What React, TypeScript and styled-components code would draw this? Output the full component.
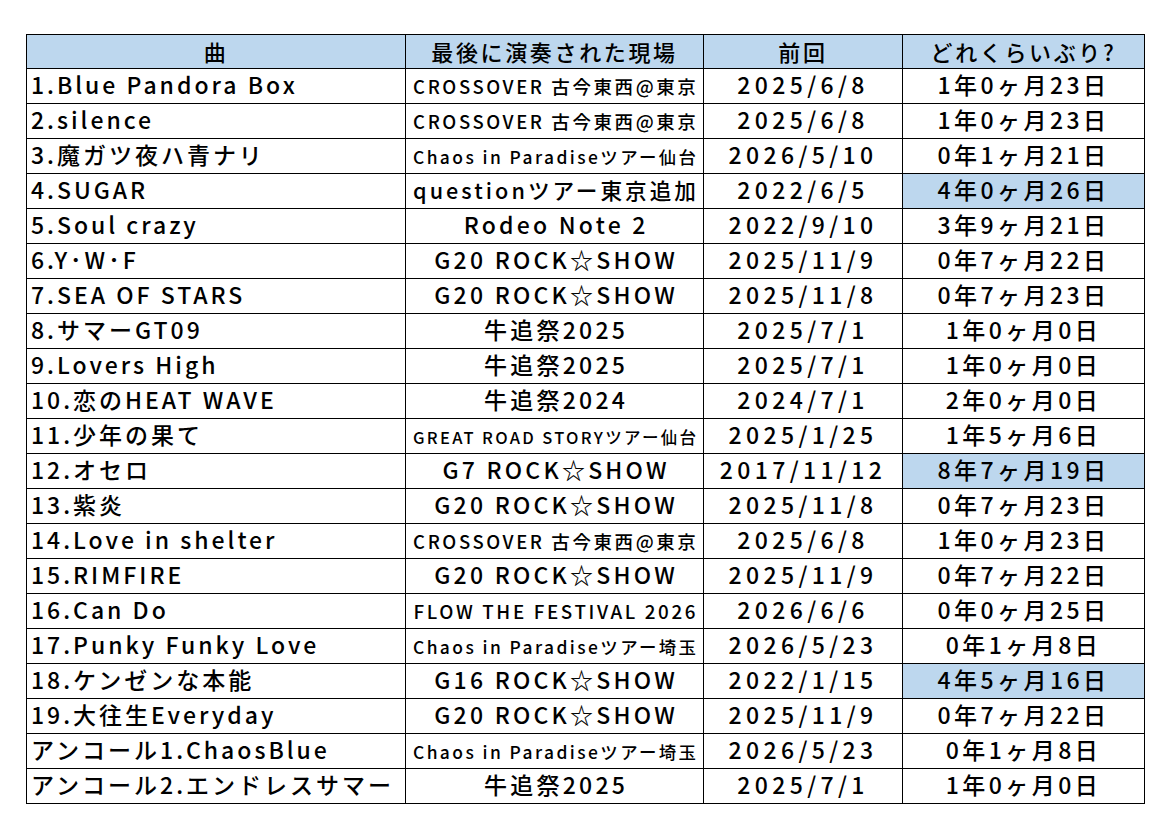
import React, { useLayoutEffect, useRef, useState } from "react";
import styled, { createGlobalStyle } from "styled-components";

const GlobalStyle = createGlobalStyle`
  html, body {
    margin: 0;
    padding: 0;
    background: #ffffff;
  }
  body {
    font-family: "Noto Sans CJK JP", "Noto Sans", sans-serif;
    color: #000;
  }
`;

const Page = styled.div`
  width: 1163px;
  height: 832px;
  padding: 34px 0 0 26px;
  box-sizing: border-box;
`;

const Table = styled.table`
  border-collapse: collapse;
  table-layout: fixed;
  width: 1118px;
`;

const Col = styled.col<{ $w: number }>`
  width: ${(p) => p.$w}px;
`;

const HeadCell = styled.th`
  height: 31px;
  padding: 0 0 2px;
  background: #bdd7ee;
  border: 1px solid #000;
  font-size: 22px;
  font-weight: 500;
  letter-spacing: 0.12em;
  text-align: center;
  line-height: 1;
  white-space: nowrap;
`;

const Cell = styled.td<{ $align?: string; $hl?: boolean; $ls: number }>`
  height: 31px;
  padding: 0 4px 3px;
  border: 1px solid #000;
  background: ${(p) => (p.$hl ? "#bdd7ee" : "#fff")};
  text-align: ${(p) => p.$align || "center"};
  font-size: 23px;
  font-weight: 500;
  line-height: 1;
  white-space: nowrap;
  overflow: hidden;
  letter-spacing: ${(p) => p.$ls}em;
`;

const FitText = styled.span`
  display: inline-block;
  white-space: nowrap;
  letter-spacing: 0.14em;
  margin-right: -0.14em;
`;

type Row = [string, string, string, string, boolean?];

const rows: Row[] = [
  ["1.Blue Pandora Box", "CROSSOVER 古今東西@東京", "2025/6/8", "1年0ヶ月23日"],
  ["2.silence", "CROSSOVER 古今東西@東京", "2025/6/8", "1年0ヶ月23日"],
  ["3.魔ガツ夜ハ青ナリ", "Chaos in Paradiseツアー仙台", "2026/5/10", "0年1ヶ月21日"],
  ["4.SUGAR", "questionツアー東京追加", "2022/6/5", "4年0ヶ月26日", true],
  ["5.Soul crazy", "Rodeo Note 2", "2022/9/10", "3年9ヶ月21日"],
  ["6.Y･W･F", "G20 ROCK☆SHOW", "2025/11/9", "0年7ヶ月22日"],
  ["7.SEA OF STARS", "G20 ROCK☆SHOW", "2025/11/8", "0年7ヶ月23日"],
  ["8.サマーGT09", "牛追祭2025", "2025/7/1", "1年0ヶ月0日"],
  ["9.Lovers High", "牛追祭2025", "2025/7/1", "1年0ヶ月0日"],
  ["10.恋のHEAT WAVE", "牛追祭2024", "2024/7/1", "2年0ヶ月0日"],
  ["11.少年の果て", "GREAT ROAD STORYツアー仙台", "2025/1/25", "1年5ヶ月6日"],
  ["12.オセロ", "G7 ROCK☆SHOW", "2017/11/12", "8年7ヶ月19日", true],
  ["13.紫炎", "G20 ROCK☆SHOW", "2025/11/8", "0年7ヶ月23日"],
  ["14.Love in shelter", "CROSSOVER 古今東西@東京", "2025/6/8", "1年0ヶ月23日"],
  ["15.RIMFIRE", "G20 ROCK☆SHOW", "2025/11/9", "0年7ヶ月22日"],
  ["16.Can Do", "FLOW THE FESTIVAL 2026", "2026/6/6", "0年0ヶ月25日"],
  ["17.Punky Funky Love", "Chaos in Paradiseツアー埼玉", "2026/5/23", "0年1ヶ月8日"],
  ["18.ケンゼンな本能", "G16 ROCK☆SHOW", "2022/1/15", "4年5ヶ月16日", true],
  ["19.大往生Everyday", "G20 ROCK☆SHOW", "2025/11/9", "0年7ヶ月22日"],
  ["アンコール1.ChaosBlue", "Chaos in Paradiseツアー埼玉", "2026/5/23", "0年1ヶ月8日"],
  ["アンコール2.エンドレスサマー", "牛追祭2025", "2025/7/1", "1年0ヶ月0日"],
];

// shrinks the text like Excel's "shrink to fit"
const Fit = ({ text, max }: { text: string; max: number }) => {
  const ref = useRef<HTMLSpanElement>(null);
  const [size, setSize] = useState(23);

  useLayoutEffect(() => {
    const el = ref.current;
    if (!el) return;
    const w = el.getBoundingClientRect().width;
    if (w > max) setSize((s) => Math.floor(((s * max) / w) * 10) / 10);
  }, [text, max, size]);

  return (
    <FitText ref={ref} style={size < 23 ? { fontSize: `${size}px` } : undefined}>
      {text}
    </FitText>
  );
};

const App = () => {
  return (
    <Page>
      <GlobalStyle />
      <Table>
        <colgroup>
          <Col $w={379} />
          <Col $w={298} />
          <Col $w={199} />
          <Col $w={242} />
        </colgroup>
        <thead>
          <tr>
            <HeadCell>曲</HeadCell>
            <HeadCell>最後に演奏された現場</HeadCell>
            <HeadCell>前回</HeadCell>
            <HeadCell>どれくらいぶり?</HeadCell>
          </tr>
        </thead>
        <tbody>
          {rows.map(([song, place, date, since, hl]) => (
            <tr key={song}>
              <Cell $align="left" $ls={0.13}>
                {song}
              </Cell>
              <Cell $ls={0}>
                <Fit text={place} max={286} />
              </Cell>
              <Cell $ls={0.19}>{date}</Cell>
              <Cell $hl={hl} $ls={0.15}>
                {since}
              </Cell>
            </tr>
          ))}
        </tbody>
      </Table>
    </Page>
  );
};

export default App;
